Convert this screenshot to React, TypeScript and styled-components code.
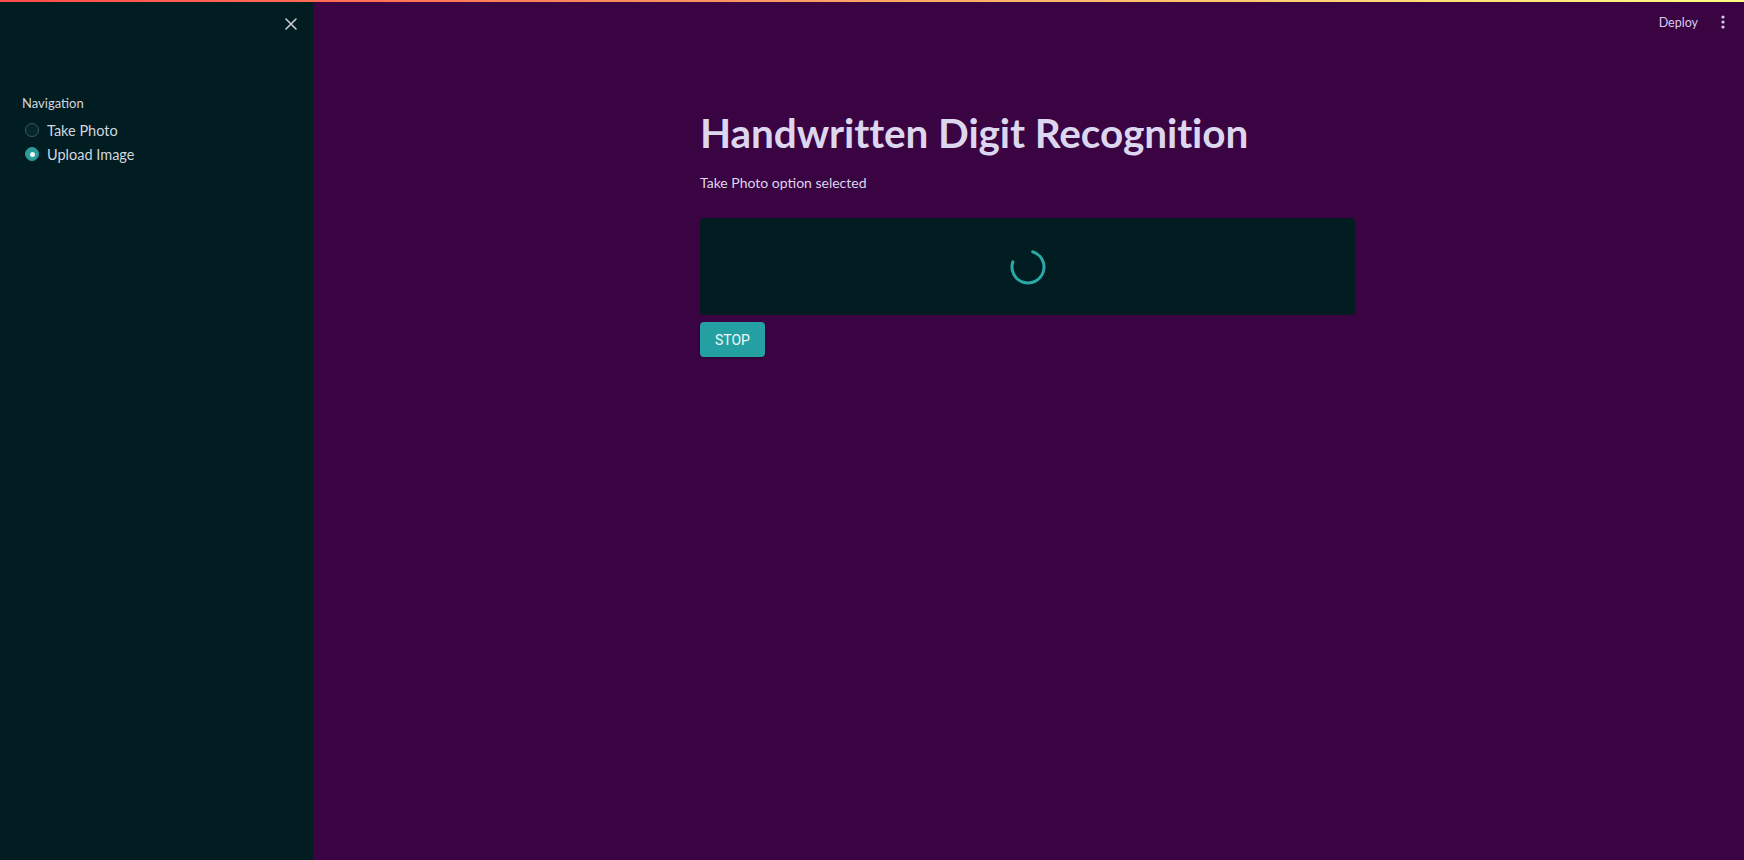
import React from "react";
import styled, { createGlobalStyle } from "styled-components";

const GlobalStyle = createGlobalStyle`
  html, body { margin: 0; padding: 0; }
  body {
    font-family: Lato, "Noto Sans", sans-serif;
    background: #3a0342;
    overflow: hidden;
  }
  * { box-sizing: border-box; }
`;

const Page = styled.div`
  display: flex;
  flex-direction: column;
  width: 100vw;
  height: 100vh;
`;

const Decoration = styled.div`
  height: 2px;
  flex: none;
  background: linear-gradient(90deg, rgb(255, 75, 75), rgb(255, 253, 128));
`;

const Body = styled.div`
  flex: 1;
  display: flex;
  min-height: 0;
`;

const Sidebar = styled.aside`
  width: 313px;
  flex: none;
  background: #011d22;
  display: flex;
  flex-direction: column;
  padding: 0 0 0 22px;
`;

const SidebarTop = styled.div`
  height: 44px;
  display: flex;
  align-items: center;
  justify-content: flex-end;
  padding-right: 14px;
`;

const IconButton = styled.button`
  width: 16px;
  height: 16px;
  padding: 0;
  border: none;
  background: transparent;
  color: #c9ced4;
  display: flex;
  align-items: center;
  justify-content: center;
  cursor: pointer;
`;

const NavLabel = styled.div`
  margin-top: 48px;
  font-size: 13px;
  line-height: 18px;
  color: #d3d6de;
`;

const RadioList = styled.div`
  display: flex;
  flex-direction: column;
  margin-top: 6px;
`;

const RadioRow = styled.label`
  display: flex;
  align-items: center;
  height: 24px;
  gap: 8px;
  font-size: 14.5px;
  color: #d3d6de;
  cursor: pointer;
`;

const RadioDot = styled.span<{ $checked?: boolean }>`
  width: 14px;
  height: 14px;
  border-radius: 50%;
  flex: none;
  margin-left: 3px;
  display: flex;
  align-items: center;
  justify-content: center;
  background: ${(p) => (p.$checked ? "#2a9c9c" : "#06262b")};
  border: 1px solid ${(p) => (p.$checked ? "#2a9c9c" : "#3a5a5f")};
  &::after {
    content: "";
    width: 5px;
    height: 5px;
    border-radius: 50%;
    background: #f2f5f6;
    display: ${(p) => (p.$checked ? "block" : "none")};
  }
`;

const Main = styled.main`
  flex: 1;
  background: #3a0342;
  display: flex;
  flex-direction: column;
`;

const MainHeader = styled.header`
  height: 40px;
  display: flex;
  align-items: center;
  justify-content: flex-end;
  gap: 23px;
  padding-right: 19px;
`;

const HeaderLink = styled.span`
  font-size: 12.5px;
  color: #d6cdee;
`;

const Content = styled.section`
  width: 655px;
  margin: 0 auto;
  padding-top: 65px;
  display: flex;
  flex-direction: column;
  transform: translateX(-1px);
`;

const Title = styled.h1`
  margin: 0;
  font-size: 40.5px;
  font-weight: 700;
  line-height: 52px;
  color: #dcd6ee;
  letter-spacing: -0.1px;
`;

const Caption = styled.p`
  margin: 14px 0 0;
  font-size: 14px;
  line-height: 20px;
  color: #dcd6ee;
`;

const VideoBox = styled.div`
  margin-top: 25px;
  height: 97px;
  border-radius: 4px;
  background: #011d22;
  display: flex;
  align-items: center;
  justify-content: center;
`;

const StopButton = styled.button`
  margin-top: 7px;
  align-self: flex-start;
  width: 65px;
  height: 35px;
  border: none;
  border-radius: 4px;
  background: #25a0a2;
  color: #f2f7f7;
  font-family: Roboto, "Liberation Sans", sans-serif;
  font-size: 14px;
  font-weight: 400;
  letter-spacing: 0;
  cursor: pointer;
  box-shadow: 0 1px 3px rgba(0, 0, 0, 0.25);
`;

const Spinner = () => {
  const r = 16;
  const c = 2 * Math.PI * r;
  return (
    <svg width="40" height="40" viewBox="0 0 40 40">
      <circle
        cx="20"
        cy="20"
        r={r}
        fill="none"
        stroke="#2aa9a6"
        strokeWidth="3"
        strokeLinecap="round"
        strokeDasharray={`${c * 0.75} ${c}`}
        transform="rotate(-73 20 20)"
      />
    </svg>
  );
};

export default function App() {
  return (
    <>
      <GlobalStyle />
      <Page>
        <Decoration />
        <Body>
          <Sidebar>
            <SidebarTop>
              <IconButton aria-label="Close sidebar">
                <svg width="12" height="12" viewBox="0 0 12 12">
                  <path d="M1 1 L11 11 M11 1 L1 11" stroke="currentColor" strokeWidth="1.6" strokeLinecap="round" />
                </svg>
              </IconButton>
            </SidebarTop>
            <NavLabel>Navigation</NavLabel>
            <RadioList>
              <RadioRow>
                <RadioDot />
                Take Photo
              </RadioRow>
              <RadioRow>
                <RadioDot $checked />
                Upload Image
              </RadioRow>
            </RadioList>
          </Sidebar>
          <Main>
            <MainHeader>
              <HeaderLink>Deploy</HeaderLink>
              <svg width="4" height="14" viewBox="0 0 4 14">
                <circle cx="2" cy="2" r="1.6" fill="#d6cdee" />
                <circle cx="2" cy="7" r="1.6" fill="#d6cdee" />
                <circle cx="2" cy="12" r="1.6" fill="#d6cdee" />
              </svg>
            </MainHeader>
            <Content>
              <Title>Handwritten Digit Recognition</Title>
              <Caption>Take Photo option selected</Caption>
              <VideoBox>
                <Spinner />
              </VideoBox>
              <StopButton>STOP</StopButton>
            </Content>
          </Main>
        </Body>
      </Page>
    </>
  );
}
